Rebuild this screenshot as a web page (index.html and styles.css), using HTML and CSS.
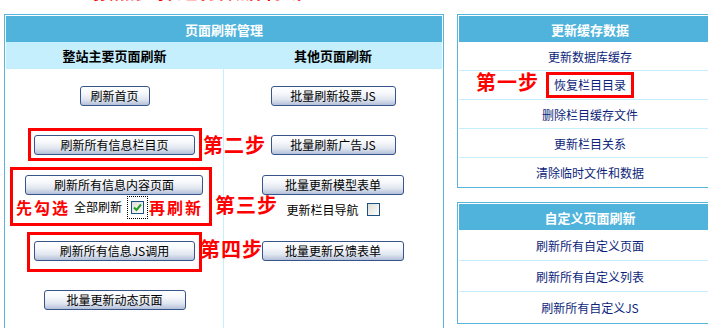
FILE: index.html
```html
<!DOCTYPE html>
<html lang="zh-CN">
<head>
<meta charset="utf-8">
<title>页面刷新管理</title>
<link rel="stylesheet" href="styles.css">
</head>
<body>
<div class="title"><span>按照步骤进行数据刷新</span></div>
<div class="layout">
  <section class="panel main">
    <div class="head">页面刷新管理</div>
    <div class="subhead"><div>整站主要页面刷新</div><div></div><div>其他页面刷新</div></div>
    <div class="body">
      <div class="col left">
        <button class="btn w70 mt17">刷新首页</button>
        <div class="mark m1"><button class="btn w161">刷新所有信息栏目页</button></div>
        <div class="mark m2">
          <button class="btn w178 indent">刷新所有信息内容页面</button>
          <div class="checkrow">
            <span class="note">先勾选</span>
            <span class="lbl">全部刷新</span>
            <span class="focus"><span class="cb"><svg width="11" height="11" viewBox="0 0 11 11"><polyline points="2,5.5 4.5,8 9,2.5" fill="none" stroke="#21a121" stroke-width="2"/></svg></span></span>
            <span class="note">再刷新</span>
          </div>
        </div>
        <div class="mark m3"><button class="btn w161">刷新所有信息JS调用</button></div>
        <button class="btn w142 mt18">批量更新动态页面</button>
      </div>
      <div class="divider"></div>
      <div class="col right">
        <button class="btn w125 mt17">批量刷新投票JS</button>
        <button class="btn w125 mt29">批量刷新广告JS</button>
        <button class="btn w142 mt20">批量更新模型表单</button>
        <div class="navrow"><span class="lbl">更新栏目导航</span><span class="cb"></span></div>
        <button class="btn w142 mt25">批量更新反馈表单</button>
      </div>
    </div>
    <span class="step s2">第二步</span>
    <span class="step s3">第三步</span>
    <span class="step s4">第四步</span>
  </section>
  <div class="side">
    <section class="panel list">
      <div class="head">更新缓存数据</div>
      <div class="row">更新数据库缓存</div>
      <div class="row"><span class="boxed">恢复栏目目录</span></div>
      <div class="row">删除栏目缓存文件</div>
      <div class="row">更新栏目关系</div>
      <div class="row">清除临时文件和数据</div>
      <span class="step s1">第一步</span>
    </section>
    <section class="panel list custom">
      <div class="head">自定义页面刷新</div>
      <div class="row">刷新所有自定义页面</div>
      <div class="row">刷新所有自定义列表</div>
      <div class="row">刷新所有自定义JS</div>
    </section>
  </div>
</div>
</body>
</html>
```
FILE: styles.css
```css
html, body {
  margin: 0;
  padding: 0;
  background: #fff;
  overflow: hidden;
}
body {
  width: 740px;
  height: 328px;
  font-family: "Noto Sans CJK SC", "Liberation Sans", sans-serif;
  font-size: 12px;
  color: #000;
}
.title {
  height: 14px;
  overflow: hidden;
  padding-left: 93px;
}
.title span {
  display: block;
  margin-top: -21px;
  font-size: 21px;
  line-height: 21px;
  font-weight: 700;
  color: #f00;
}
.layout {
  display: flex;
  align-items: flex-start;
}
.panel {
  position: relative;
  border: 1px solid #5ab5dd;
  padding: 1px;
  background: #fff;
  box-sizing: border-box;
}
.main {
  margin-left: 4px;
  width: 440px;
  height: 320px;
}
.head {
  height: 26px;
  background: #4fb3dc;
  color: #fff;
  font-weight: 700;
  font-size: 13px;
  display: flex;
  align-items: center;
  justify-content: center;
}
.subhead {
  height: 27px;
  background: #c6effd;
  display: grid;
  grid-template-columns: 217px 1px 218px;
  align-items: center;
  text-align: center;
  font-weight: 700;
  font-size: 13px;
}
.body {
  display: grid;
  grid-template-columns: 217px 1px 218px;
  height: 262px;
}
.divider {
  background: #c6effd;
}
.col {
  display: flex;
  flex-direction: column;
  align-items: center;
}
.btn {
  height: 20px;
  box-sizing: border-box;
  padding: 0;
  border: 1px solid #37558a;
  border-radius: 3px;
  background: linear-gradient(#ffffff 0%, #f6f8fb 35%, #dfe5ef 70%, #b3c0d9 100%);
  font-family: "Noto Sans CJK SC", "Liberation Sans", sans-serif;
  font-size: 12px;
  line-height: 18px;
  color: #000;
}
.w70 { width: 70px; }
.w125 { width: 125px; }
.w142 { width: 142px; }
.w161 { width: 161px; }
.w178 { width: 178px; }
.mt17 { margin-top: 17px; }
.mt18 { margin-top: 18px; }
.mt20 { margin-top: 20px; }
.mt25 { margin-top: 25px; }
.mt29 { margin-top: 29px; }
.mark {
  border: 3px solid #f00;
  box-sizing: border-box;
  display: flex;
  flex-direction: column;
}
.m1 {
  margin-top: 22px;
  width: 174px;
  height: 33px;
  padding-top: 4px;
  align-items: center;
}
.m2 {
  margin-top: 6px;
  width: 202px;
  height: 59px;
  padding-top: 5px;
  align-self: flex-start;
  margin-left: 4px;
}
.m2 .indent {
  margin-left: 12px;
}
.m3 {
  margin-top: 6px;
  width: 175px;
  height: 40px;
  padding-top: 6px;
  align-items: center;
}
.checkrow {
  display: flex;
  align-items: center;
  height: 24px;
  padding-left: 3px;
}
.note {
  color: #f00;
  font-weight: 700;
  font-size: 16px;
  letter-spacing: 2px;
  line-height: 18px;
}
.lbl {
  font-size: 12px;
  line-height: 14px;
}
.checkrow .lbl {
  margin-left: 4px;
  margin-right: 5px;
}
.focus {
  border: 1px dotted #000;
  padding: 4px 3px;
  display: flex;
  margin-right: 1px;
}
.cb {
  width: 13px;
  height: 13px;
  box-sizing: border-box;
  border: 1px solid #1c5180;
  background: linear-gradient(135deg, #dcdcd7, #ffffff);
  display: flex;
  align-items: center;
  justify-content: center;
}
.navrow {
  margin-top: 8px;
  height: 13px;
  display: flex;
  align-items: center;
  gap: 8px;
}
.step {
  position: absolute;
  color: #f00;
  font-weight: 700;
  font-size: 20px;
  line-height: 20px;
  letter-spacing: 1px;
  white-space: nowrap;
}
.s2 { left: 198px; top: 120px; }
.s3 { left: 210px; top: 180px; }
.s4 { left: 195px; top: 224px; }
.s1 { left: 18px; top: 57px; }
.side {
  margin-left: 13px;
  display: flex;
  flex-direction: column;
}
.list {
  width: 266px;
}
.row {
  height: 28px;
  border-bottom: 1px solid #c6effd;
  display: flex;
  align-items: center;
  justify-content: center;
  color: #0d1f7a;
  font-size: 12px;
}
.row:last-of-type {
  border-bottom: none;
}
.boxed {
  border: 3px solid #f00;
  padding: 2px 5px;
  line-height: 16px;
}
.custom {
  margin-top: 14px;
}
.custom .row {
  height: 30px;
}
```
